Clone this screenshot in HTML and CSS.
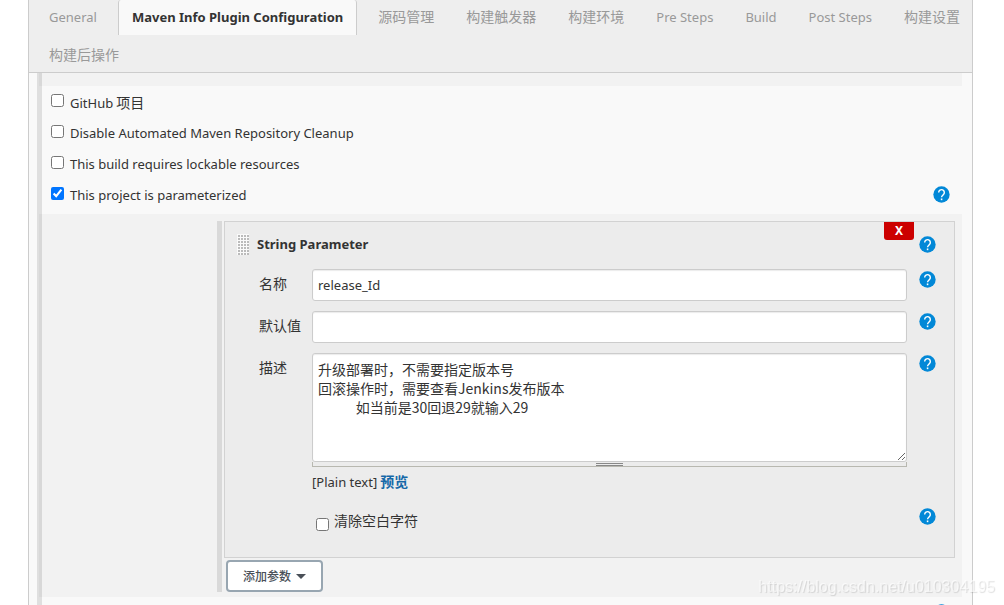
FILE: index.html
```html
<!DOCTYPE html>
<html lang="zh-CN">
<head>
<meta charset="utf-8">
<title>Maven Info Plugin Configuration</title>
<link rel="stylesheet" href="styles.css">
</head>
<body>
<svg class="sprite" aria-hidden="true">
  <symbol id="help" viewBox="0 0 24 24">
    <circle cx="12" cy="12" r="11.5" fill="#0288d7"/>
    <path d="M8 9.200a4 4 0 1 1 6.600 3C13.200 13.400 12.100 14 12.100 16" fill="none" stroke="#fff" stroke-width="2"/>
    <rect x="11" y="17.600" width="2.200" height="2.400" fill="#fff"/>
  </symbol>
</svg>
<main class="panel">
  <nav class="tabs">
    <a class="tab latin" href="#general">General</a>
    <a class="tab latin tab-active" href="#maven">Maven Info Plugin Configuration</a>
    <a class="tab" href="#scm">源码管理</a>
    <a class="tab" href="#triggers">构建触发器</a>
    <a class="tab" href="#env">构建环境</a>
    <a class="tab latin" href="#pre">Pre Steps</a>
    <a class="tab latin" href="#build">Build</a>
    <a class="tab latin" href="#post">Post Steps</a>
    <a class="tab" href="#settings">构建设置</a>
    <a class="tab" href="#actions">构建后操作</a>
  </nav>
  <form class="content">
    <div class="section">
      <div class="shade shade-strip"></div>
      <div class="options">
        <div class="option"><label class="check"><input type="checkbox"><span><span class="latin">GitHub</span> 项目</span></label></div>
        <div class="option"><label class="check"><input type="checkbox"><span class="latin">Disable Automated Maven Repository Cleanup</span></label></div>
        <div class="option"><label class="check"><input type="checkbox"><span class="latin">This build requires lockable resources</span></label></div>
        <div class="option"><label class="check"><input type="checkbox" checked><span class="latin">This project is parameterized</span></label>
          <button type="button" class="help" aria-label="Help"><svg><use href="#help"/></svg></button></div>
      </div>
      <div class="shade params">
        <div class="param-list">
          <section class="card">
            <header class="card-head">
              <span class="handle"></span>
              <h2 class="card-title latin">String Parameter</h2>
              <button type="button" class="help" aria-label="Help"><svg><use href="#help"/></svg></button>
              <button type="button" class="delete">X</button>
            </header>
            <div class="fields">
              <label class="name" for="pname">名称</label>
              <input class="text latin" id="pname" type="text" value="release_Id">
              <button type="button" class="help" aria-label="Help"><svg><use href="#help"/></svg></button>

              <label class="name" for="pvalue">默认值</label>
              <input class="text latin" id="pvalue" type="text">
              <button type="button" class="help" aria-label="Help"><svg><use href="#help"/></svg></button>

              <label class="name" for="pdesc">描述</label>
              <div class="description">
                <textarea class="text area" id="pdesc" rows="5">升级部署时，不需要指定版本号
回滚操作时，需要查看Jenkins发布版本
            如当前是30回退29就输入29</textarea>
                <div class="grip"><span></span></div>
                <div class="format"><span class="latin">[Plain text]</span> <a class="preview" href="#preview">预览</a></div>
              </div>
              <button type="button" class="help" aria-label="Help"><svg><use href="#help"/></svg></button>

              <label class="trim"><input type="checkbox"><span>清除空白字符</span></label>
              <button type="button" class="help" aria-label="Help"><svg><use href="#help"/></svg></button>
            </div>
          </section>
          <button type="button" class="add">添加参数<span class="caret"></span></button>
        </div>
      </div>
      <div class="options">
        <div class="option"><button type="button" class="help" aria-label="Help"><svg><use href="#help"/></svg></button></div>
      </div>
    </div>
  </form>
</main>
<div class="watermark">https://blog.csdn.net/u010304195</div>
</body>
</html>
```
FILE: styles.css
```css
* {
  box-sizing: border-box;
}

body {
  margin: 0;
  height: 100vh;
  overflow: hidden;
  background: #fff;
  color: #333;
  font: 14px/19px "Noto Sans CJK SC", "Noto Sans", sans-serif;
}

.sprite {
  position: absolute;
  width: 0;
  height: 0;
}

.latin {
  font-family: "Noto Sans", "Noto Sans CJK SC", sans-serif;
  font-size: 13px;
}

.panel {
  min-height: 100vh;
  margin: 0 31px 0 28px;
  border: solid #ccc;
  border-width: 0 1px;
  background: #f9f9f9;
}

.tabs {
  display: flex;
  flex-wrap: wrap;
  gap: 4px 10px;
  padding-left: 9px;
  border-bottom: 1px solid #ccc;
  background: #eee;
}

.tab {
  padding: 0 10px 2px;
  border: solid transparent;
  border-width: 0 1px;
  color: #999;
  line-height: 32px;
  text-decoration: none;
}

.tab.latin {
  padding-bottom: 0;
  line-height: 34px;
}

.tab.tab-active {
  margin-bottom: -1px;
  padding: 0 13px;
  border-color: #ccc;
  border-radius: 3px 3px 0 0;
  background: #f9f9f9;
  color: #333;
  font-weight: 700;
}

.content {
  padding: 0 10px 0 8px;
}

.section {
  border-left: 5px solid #dfdfdf;
}

.shade {
  margin-left: -3px;
  background: rgba(0, 0, 0, 0.027);
}

.shade-strip {
  height: 13px;
}

.options {
  padding: 1px 12px 3px 9px;
}

.option {
  display: flex;
  justify-content: space-between;
  align-items: flex-start;
  height: 31px;
}

.option .help {
  margin: 6px 0 0 auto;
}

.check {
  display: flex;
  gap: 6px;
  line-height: 30px;
}

input[type="checkbox"] {
  width: 13px;
  height: 13px;
  margin: 7px 0 0;
}

.help {
  width: 17px;
  height: 17px;
  padding: 0;
  border: 0;
  background: none;
}

.help svg {
  display: block;
  width: 17px;
  height: 17px;
}

.params {
  padding: 7px 7px 5px 178px;
}

.param-list {
  padding-left: 2px;
  border-left: 5px solid #d9d9d9;
}

.card {
  position: relative;
  padding-bottom: 22px;
  border: 1px solid #d2d2d2;
  background: #ececec;
}

.card-head {
  display: flex;
  align-items: center;
  height: 45px;
  margin-bottom: 2px;
  padding: 0 18px 0 12px;
}

.card-head .help {
  margin-left: auto;
}

.handle {
  width: 12px;
  height: 21px;
  margin-right: 8px;
  background: radial-gradient(circle at 2px 2px, #bbb 1px, #fafafa 1px) 0 0 / 3px 3px;
}

.card-title {
  margin: 0;
  font-weight: 700;
}

.delete {
  position: absolute;
  top: 0;
  right: 40px;
  width: 30px;
  height: 18px;
  padding: 0;
  border: 0;
  border-radius: 0 0 3px 3px;
  background: #c00;
  color: #fff;
  font: 700 12px/18px "Noto Sans", sans-serif;
}

.fields {
  display: grid;
  grid-template-columns: 53px 1fr 29px;
  gap: 10px 0;
  align-items: start;
  padding: 0 18px 0 34px;
}

.fields .help {
  margin-top: 2px;
  justify-self: end;
}

.name {
  line-height: 28px;
}

.text {
  display: block;
  width: 100%;
  height: 32px;
  margin: 0;
  padding: 0 5px;
  border: 1px solid #ccc;
  border-radius: 3px;
  background: #fff;
  box-shadow: inset 0 1px 1px rgba(0, 0, 0, 0.08);
  color: #333;
}

.area {
  height: 109px;
  padding: 6px 5px;
  font: inherit;
  resize: both;
}

.grip {
  display: flex;
  justify-content: center;
  height: 5px;
  padding-top: 1px;
  border: solid #b8b8b0;
  border-width: 0 1px 1px;
}

.grip span {
  width: 27px;
  height: 3px;
  border: solid #888;
  border-width: 1px 0;
}

.format {
  height: 29px;
  line-height: 28px;
}

.preview {
  color: #1568a8;
  font-weight: 700;
  text-decoration: none;
}

.trim {
  display: flex;
  grid-column: 2;
  gap: 5px;
  height: 29px;
  padding-left: 4px;
  line-height: 28px;
}

.trim input[type="checkbox"] {
  margin-top: 12px;
}

.add {
  display: flex;
  align-items: center;
  gap: 5px;
  height: 32px;
  margin: 2px 0 0 2px;
  padding: 0 15px;
  border: 2px solid #98a6b1;
  border-radius: 4px;
  background: #fff;
  color: #4a5058;
  font: 500 12px/18px "Noto Sans CJK SC", sans-serif;
}

.caret {
  border: solid transparent;
  border-width: 5px 5px 0;
  border-top-color: #4a5058;
}

.watermark {
  position: fixed;
  right: 9px;
  bottom: 8px;
  color: rgba(255, 255, 255, 0.6);
  font: 16px/20px "Liberation Sans", sans-serif;
  text-shadow: 1px 1px 1px rgba(0, 0, 0, 0.13);
  pointer-events: none;
}
```
